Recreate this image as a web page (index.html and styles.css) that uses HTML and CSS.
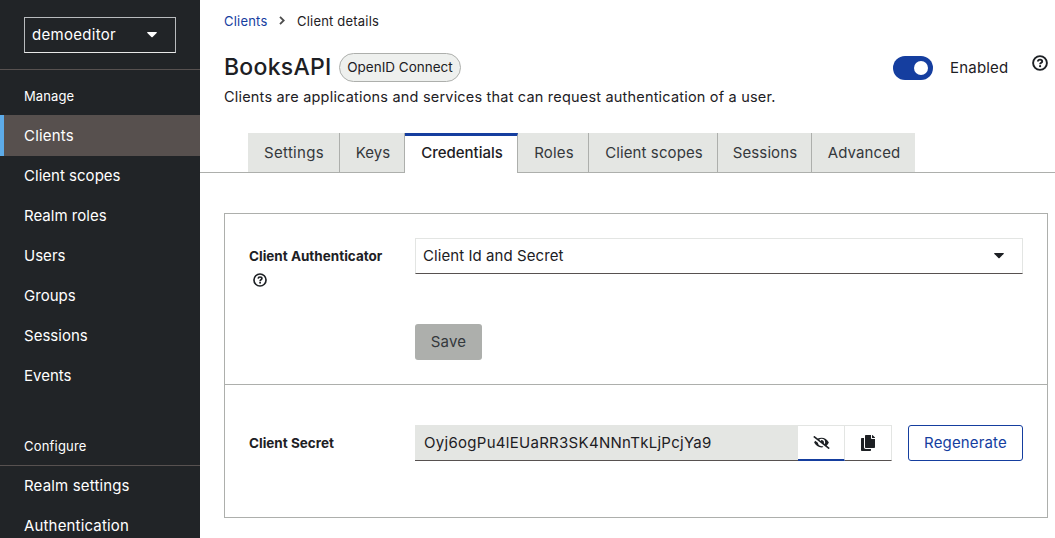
FILE: index.html
```html
<!DOCTYPE html>
<html lang="en">
<head>
<meta charset="utf-8">
<title>Client details</title>
<link rel="stylesheet" href="styles.css">
</head>
<body>
<div class="app">
  <nav class="sidebar">
    <div class="realm">
      <button class="realm-select"><span>demoeditor</span><svg class="caret" width="10" height="6" viewBox="0 0 10 6"><path d="M.6 0h8.8q.8.2.2.9L5.6 5.1q-.6.5-1.2 0L.4.9Q-.2.2.6 0z"/></svg></button>
    </div>
    <h2 class="nav-title">Manage</h2>
    <a class="nav-link active">Clients</a>
    <a class="nav-link">Client scopes</a>
    <a class="nav-link">Realm roles</a>
    <a class="nav-link">Users</a>
    <a class="nav-link">Groups</a>
    <a class="nav-link">Sessions</a>
    <a class="nav-link">Events</a>
    <h2 class="nav-title configure">Configure</h2>
    <a class="nav-link wide">Realm settings</a>
    <a class="nav-link wide">Authentication</a>
  </nav>
  <main class="main">
    <div class="breadcrumb"><a>Clients</a><svg width="6" height="9" viewBox="0 0 6 9"><path d="M1 .8l3.7 3.7L1 8.2" fill="none" stroke="#4d4d4d" stroke-width="1.8"/></svg><span class="crumb">Client details</span></div>
    <header class="head">
      <h1>BooksAPI</h1>
      <span class="badge">OpenID Connect</span>
      <span class="toggle"><i></i></span>
      <span class="enabled">Enabled</span>
      <svg class="help big" viewBox="0 0 16 16"><circle cx="8" cy="8" r="6.9"/><path d="M5.9 6.5C6 5.2 6.9 4.6 8 4.6c1.2 0 2.2.7 2.2 1.8C10.2 7.9 8.1 7.7 8.1 9.3"/><circle class="dot" cx="8.1" cy="11.2" r="1.1"/></svg>
    </header>
    <p class="desc">Clients are applications and services that can request authentication of a user.</p>
    <div class="tabs">
      <a class="tab t1">Settings</a><a class="tab t2">Keys</a><a class="tab t3 current">Credentials</a><a class="tab t4">Roles</a><a class="tab t5">Client scopes</a><a class="tab t6">Sessions</a><a class="tab t7">Advanced</a>
    </div>
    <section class="card">
      <div class="card-part first">
        <div class="label"><span>Client Authenticator</span><svg class="help" viewBox="0 0 16 16"><circle cx="8" cy="8" r="6.9"/><path d="M5.9 6.5C6 5.2 6.9 4.6 8 4.6c1.2 0 2.2.7 2.2 1.8C10.2 7.9 8.1 7.7 8.1 9.3"/><circle class="dot" cx="8.1" cy="11.2" r="1.1"/></svg></div>
        <div class="fields">
          <div class="select"><span>Client Id and Secret</span><svg class="caret" width="10" height="6" viewBox="0 0 10 6"><path d="M.6 0h8.8q.8.2.2.9L5.6 5.1q-.6.5-1.2 0L.4.9Q-.2.2.6 0z"/></svg></div>
          <button class="save">Save</button>
        </div>
      </div>
      <div class="card-part">
        <div class="label"><span class="secret-label">Client Secret</span></div>
        <div class="secret">
          <span class="value">Oyj6ogPu4lEUaRR3SK4NNnTkLjPcjYa9</span>
          <button class="icon eye"><svg width="17" height="13" viewBox="0 0 640 512"><path d="M320 400c-75.900 0-137.300-58.700-142.900-133.100L72.200 185.800c-13.800 17.300-26.500 35.600-36.700 55.600a32.400 32.400 0 0 0 0 29.200C89.700 376.400 197.100 448 320 448c26.900 0 52.900-4 77.900-10.500L346 397.400a144.100 144.100 0 0 1-26 2.600zm313.800 58.100L523.300 372.700a331.300 331.300 0 0 0 81.300-102.100 32.400 32.400 0 0 0 0-29.200C550.300 135.600 442.900 64 320 64a308.200 308.200 0 0 0-147.300 37.700L45.500 3.400A16 16 0 0 0 23 6.200L3.400 31.500A16 16 0 0 0 6.200 53.900l588.400 454.700a16 16 0 0 0 22.400-2.800l19.600-25.300a16 16 0 0 0-2.800-22.400zM450.200 316.100l-39.300-30.400A94.800 94.800 0 0 0 416 256a94.800 94.800 0 0 0-121.300-92.200A47.700 47.700 0 0 1 304 192a46.600 46.600 0 0 1-1.500 10l-73.600-56.900A142.300 142.300 0 0 1 320 112a143.900 143.900 0 0 1 144 144c0 21.600-5.300 41.800-13.800 60.100z"/></svg></button>
          <button class="icon"><svg width="14" height="16" viewBox="0 0 448 512"><path d="M320 448v40c0 13.300-10.700 24-24 24H24c-13.300 0-24-10.700-24-24V120c0-13.300 10.700-24 24-24h72v296c0 30.900 25.100 56 56 56zm0-344V0H152c-13.300 0-24 10.700-24 24v368c0 13.300 10.700 24 24 24h272c13.300 0 24-10.700 24-24V128H344c-13.200 0-24-10.800-24-24zm121-31L375 7a24 24 0 0 0-17-7h-6v96h96v-6.100a24 24 0 0 0-7-16.900z"/></svg></button>
          <button class="regen">Regenerate</button>
        </div>
      </div>
    </section>
  </main>
</div>
</body>
</html>
```
FILE: styles.css
```css
* { box-sizing: border-box; }
body { margin: 0; background: #fff; color: #1d2024; font: 15px/24px Inter, "Open Sans", sans-serif; overflow: hidden; }
button { font: inherit; padding: 0; margin: 0; color: inherit; }
h1, h2, p { margin: 0; font-weight: 400; }
svg { display: block; flex: none; }
.app { display: flex; width: 1055px; height: 538px; overflow: hidden; }
.sidebar { width: 200px; flex: none; background: #212427; color: #fff; }
.realm { height: 70px; padding: 17px 24px 0; border-bottom: 1px solid #575150; }
.realm-select { width: 152px; height: 36px; padding: 0 18px 0 7px; border: 1px solid #b8bbbe; border-bottom-color: #e8e8e8; background: none; display: flex; align-items: center; justify-content: space-between; letter-spacing: .3px; }
.caret { fill: currentColor; }
.nav-title { height: 46px; padding: 14px 24px 0; font-size: 13px; line-height: 24px; letter-spacing: .1px; }
.nav-link { display: block; height: 40px; padding: 8px 24px; letter-spacing: .02px; }
.nav-link.wide { letter-spacing: .16px; }
.nav-link.active { height: 41px; margin-top: -1px; padding-top: 9px; padding-left: 20px; border-left: 4px solid #5dabe8; background: #57504e; letter-spacing: .2px; }
.configure { height: 70px; padding-top: 38px; border-bottom: 1px solid #575150; letter-spacing: .2px; }
.main { flex: 1; min-width: 0; }
.breadcrumb { display: flex; align-items: center; height: 21px; margin: 10px 0 1px 24px; font-size: 13px; letter-spacing: .2px; }
.breadcrumb a { width: 55px; color: #153e9f; }
.crumb { margin-left: 12px; }
.head { display: flex; height: 54px; padding: 20px 7px 0 24px; }
h1 { width: 115px; font-size: 23px; line-height: 30px; font-weight: 500; white-space: nowrap; letter-spacing: .25px; }
.badge { width: 122px; height: 29px; margin-top: 1px; border: 1px solid #adafac; border-radius: 15px; background: #eef0ee; font-size: 13.5px; line-height: 27px; text-align: center; white-space: nowrap; }
.toggle { width: 40px; height: 24px; margin: 4px 17px 0 auto; border-radius: 12px; background: #153e9f; padding: 5px; display: flex; justify-content: flex-end; }
.toggle i { width: 14px; height: 14px; border-radius: 50%; background: #fff; }
.enabled { width: 82px; margin-top: 4px; letter-spacing: .2px; }
.help { width: 14px; height: 14px; fill: none; stroke: #1d2024; stroke-width: 1.9; }
.help .dot { fill: #1d2024; stroke: none; }
.help.big { width: 16px; height: 16px; margin-top: 3px; }
.desc { height: 47px; padding: 0 24px; white-space: nowrap; font-size: 14.5px; line-height: 22px; letter-spacing: .195px; }
.tabs { display: flex; height: 40px; padding-left: 48px; border-bottom: 1px solid #adafac; }
.tab { height: 39px; padding-left: 1px; background: #e4e6e3; border-right: 1px solid #adafac; text-align: center; line-height: 39px; white-space: nowrap; color: #34383c; letter-spacing: .1px; }
.tab.current { height: 40px; background: #fff; border-top: 3px solid #153e9f; line-height: 33px; color: #1d2024; font-weight: 450; letter-spacing: 0; }
.tab.t1 { width: 92px; letter-spacing: .3px; }
.tab.t2 { width: 65px; padding-left: 2px; }
.tab.t3 { width: 113px; padding-left: 2px; }
.tab.t4 { width: 71px; padding-left: 2px; letter-spacing: .2px; }
.tab.t5 { width: 129px; padding-left: 2px; }
.tab.t6 { width: 94px; }
.tab.t7 { width: 103px; border-right: 0; }
.card { width: 824px; height: 305px; margin: 40px 0 0 24px; border: 1px solid #adafac; }
.card-part { display: flex; padding: 40px 24px 0; height: 132px; }
.first { height: 171px; padding-top: 24px; border-bottom: 1px solid #adafac; }
.label { width: 166px; flex: none; font-size: 13.5px; font-weight: 700; white-space: nowrap; }
.first .label { padding-top: 6px; }
.label .help { margin: 5px 0 0 4px; }
.label span { display: block; }
.secret-label { margin-top: 6px; }
.select { width: 608px; height: 36px; border: 1px solid #e3e5e3; border-bottom-color: #575150; padding: 0 18px 0 7px; display: flex; align-items: center; justify-content: space-between; letter-spacing: .07px; }
.save { display: block; width: 67px; height: 36px; margin-top: 50px; border: 0; border-radius: 3px; background: #adafac; color: #34383c; letter-spacing: .2px; }
.secret { display: flex; height: 36px; }
.value { width: 383px; border-bottom: 1px solid #575150; background: #e4e6e3; padding-left: 9px; line-height: 35px; white-space: nowrap; letter-spacing: .29px; }
.icon { width: 47px; height: 36px; border: 1px solid #e3e5e3; border-left: 0; border-bottom-color: #575150; background: #fff; display: flex; align-items: center; justify-content: center; fill: #1d2024; padding-bottom: 1px; }
.icon.eye { border-bottom: 2px solid #153e9f; }
.regen { width: 115px; height: 36px; margin-left: 16px; border: 1px solid #153e9f; border-radius: 3px; background: #fff; color: #153e9f; letter-spacing: .15px; }
```
